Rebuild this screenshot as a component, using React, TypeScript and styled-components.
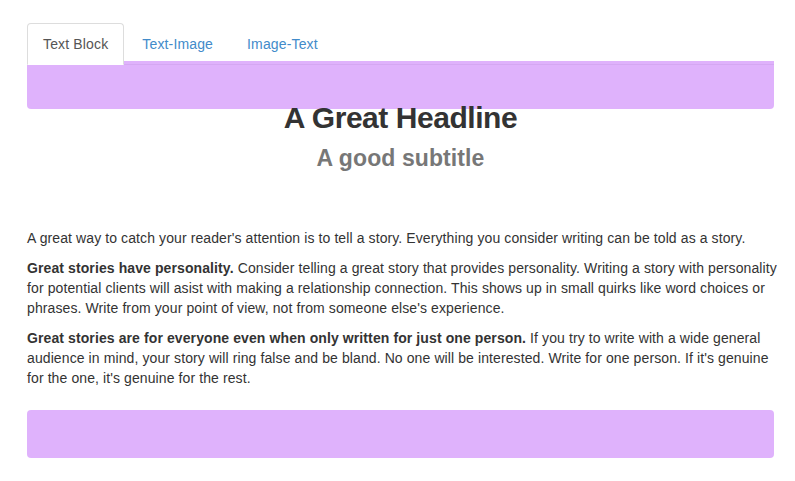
import React from "react";
import styled, { createGlobalStyle } from "styled-components";

const Global = createGlobalStyle`
  html, body { margin: 0; padding: 0; background: #fff; }
  body {
    font-family: "Liberation Sans", Arial, Helvetica, sans-serif;
    font-size: 14px;
    line-height: 20px;
    color: #333;
  }
`;

const Page = styled.div`
  width: 747px;
  padding: 23px 0 0 27px;
`;

const TabList = styled.ul`
  display: flex;
  list-style: none;
  margin: 0;
  padding: 0;
  border-bottom: 1px solid #ddd;
`;

const TabItem = styled.li`
  margin: 0 2px -1px 0;
`;

const TabLink = styled.a<{ $active?: boolean }>`
  display: block;
  padding: 10px 15px;
  line-height: 20px;
  font-size: 14px;
  letter-spacing: 0.15px;
  text-decoration: none;
  border: 1px solid ${(p) => (p.$active ? "#ddd" : "transparent")};
  border-bottom-color: transparent;
  border-radius: 4px 4px 0 0;
  background: ${(p) => (p.$active ? "#fff" : "transparent")};
  color: ${(p) => (p.$active ? "#555" : "#428bca")};
  cursor: pointer;
`;

const DropZone = styled.div<{ $top?: boolean }>`
  background: rgba(209, 145, 251, 0.7);
  border-radius: ${(p) => (p.$top ? "0 0 4px 4px" : "4px")};
  margin-top: ${(p) => (p.$top ? "-4px" : "0")};
  height: 48px;
`;

const Header = styled.header`
  text-align: center;
`;

const Headline = styled.h1`
  margin: -8px 0 0;
  font-size: 30px;
  line-height: 33px;
  font-weight: 700;
  letter-spacing: -0.45px;
  color: #333;
`;

const Subtitle = styled.h2`
  margin: 12px 0 0;
  font-size: 23px;
  line-height: 25px;
  font-weight: 700;
  letter-spacing: 0.1px;
  color: #777;
`;

const Body = styled.div`
  margin: 57px -6px 22px 0;
  letter-spacing: 0.1px;
`;

const Para = styled.p`
  margin: 0 0 10px;
`;

export default function App() {
  return (
    <>
      <Global />
      <Page>
        <TabList>
          <TabItem>
            <TabLink $active>Text Block</TabLink>
          </TabItem>
          <TabItem>
            <TabLink>Text-Image</TabLink>
          </TabItem>
          <TabItem>
            <TabLink>Image-Text</TabLink>
          </TabItem>
        </TabList>
        <DropZone $top />
        <Header>
          <Headline>A Great Headline</Headline>
          <Subtitle>A good subtitle</Subtitle>
        </Header>
        <Body>
          <Para>
            A great way to catch your reader's attention is to tell a story. Everything you consider writing can be told as a story.
          </Para>
          <Para>
            <strong>Great stories have personality.</strong> Consider telling a great story that provides personality. Writing a story with personality for potential clients will asist with making a relationship connection. This shows up in small quirks like word choices or phrases. Write from your point of view, not from someone else's experience.
          </Para>
          <Para>
            <strong>Great stories are for everyone even when only written for just one person.</strong> If you try to write with a wide general audience in mind, your story will ring false and be bland. No one will be interested. Write for one person. If it's genuine for the one, it's genuine for the rest.
          </Para>
        </Body>
        <DropZone />
      </Page>
    </>
  );
}
